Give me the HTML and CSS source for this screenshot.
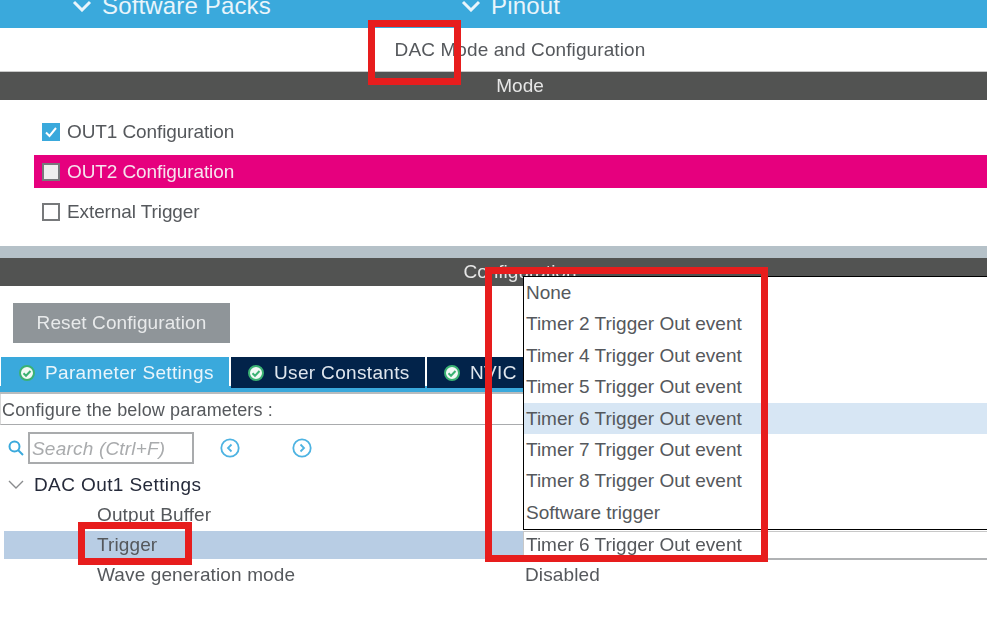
FILE: index.html
```html
<!DOCTYPE html>
<html>
<head>
    <meta charset="utf-8" />
    <title>DAC Mode and Configuration</title>
    <link rel="stylesheet" href="styles.css">
</head>
<body>
    <div class="topbar">
        <div class="pack pack-first">
            <svg class="chev" viewBox="0 0 20 12"><path d="M2 2l8 8 8-8" /></svg>
            <span>Software Packs</span>
        </div>
        <div class="pack">
            <svg class="chev" viewBox="0 0 20 12"><path d="M2 2l8 8 8-8" /></svg>
            <span>Pinout</span>
        </div>
    </div>

    <div class="title">DAC Mode and Configuration</div>
    <div class="bar">Mode</div>

    <div class="modes">
        <div class="mode">
            <span class="box box-on"><svg viewBox="0 0 18 18"><path d="M4 9.5l3.5 3.5 6.5-8" /></svg></span>
            OUT1 Configuration
        </div>
        <div class="mode mode-pink">
            <span class="box box-off"></span>
            OUT2 Configuration
        </div>
        <div class="mode">
            <span class="box"></span>
            External Trigger
        </div>
    </div>

    <div class="divider"></div>
    <div class="bar">Configuration</div>

    <button class="reset">Reset Configuration</button>

    <div class="tabs">
        <div class="tab tab-active tab-param">
            <svg class="ok" viewBox="0 0 16 16"><circle cx="8" cy="8" r="7" /><path d="M4.5 8.2l2.5 2.5 4.5-4.7" /></svg>
            Parameter Settings
        </div>
        <div class="tab tab-user">
            <svg class="ok" viewBox="0 0 16 16"><circle cx="8" cy="8" r="7" /><path d="M4.5 8.2l2.5 2.5 4.5-4.7" /></svg>
            User Constants
        </div>
        <div class="tab tab-nvic">
            <svg class="ok" viewBox="0 0 16 16"><circle cx="8" cy="8" r="7" /><path d="M4.5 8.2l2.5 2.5 4.5-4.7" /></svg>
            NVIC
        </div>
    </div>

    <div class="hint">Configure the below parameters :</div>

    <div class="searchrow">
        <svg class="lens" viewBox="0 0 16 16"><circle cx="6.5" cy="6.5" r="5" /><path d="M10 10l5 5" /></svg>
        <div class="search">Search (Ctrl+F)</div>
        <svg class="nav nav-prev" viewBox="0 0 20 20"><circle cx="10" cy="10" r="8.7" /><path d="M11.5 6.5L8 10l3.5 3.5" /></svg>
        <svg class="nav nav-next" viewBox="0 0 20 20"><circle cx="10" cy="10" r="8.7" /><path d="M8.5 6.5L12 10l-3.5 3.5" /></svg>
    </div>

    <div class="tree">
        <div class="group">
            <svg class="fold" viewBox="0 0 16 10"><path d="M1 1l7 7 7-7" /></svg>
            DAC Out1 Settings
        </div>
        <div class="param"><span>Output Buffer</span><span></span></div>
        <div class="param param-sel"><span>Trigger</span><span class="value">Timer 6 Trigger Out event</span></div>
        <div class="param"><span>Wave generation mode</span><span>Disabled</span></div>
    </div>

    <div class="dropdown">
        <div class="opt">None</div>
        <div class="opt">Timer 2 Trigger Out event</div>
        <div class="opt">Timer 4 Trigger Out event</div>
        <div class="opt">Timer 5 Trigger Out event</div>
        <div class="opt opt-hover">Timer 6 Trigger Out event</div>
        <div class="opt">Timer 7 Trigger Out event</div>
        <div class="opt">Timer 8 Trigger Out event</div>
        <div class="opt">Software trigger</div>
    </div>

    <div class="mark mark-title"></div>
    <div class="mark mark-list"></div>
    <div class="mark mark-trigger"></div>
</body>
</html>
```

FILE: styles.css
```css
* {
    margin: 0;
    padding: 0;
    box-sizing: border-box;
}

html, body {
    height: 100%;
    overflow: hidden;
}

body {
    position: relative;
    background: white;
    color: #55585c;
    font-family: "Liberation Sans", Arial, sans-serif;
    font-size: 19px;
    filter: blur(0.35px);
}

.topbar {
    height: 28px;
    padding-left: 72px;
    display: flex;
    overflow: hidden;
    background: #3aa9dc;
    color: #e9f5fb;
    font-size: 24px;
    letter-spacing: 0.15px;
}

.pack {
    display: flex;
    align-items: center;
    gap: 10px;
    height: 28px;
    margin-top: -8px;
}

.pack-first {
    width: 389px;
}

.chev {
    width: 20px;
    height: 12px;
    fill: none;
    stroke: #e9f5fb;
    stroke-width: 3;
}

.title {
    height: 44px;
    padding-left: 53px;
    line-height: 44px;
    text-align: center;
    letter-spacing: 0.1px;
    border-bottom: 1px solid #c8c8c8;
}

.bar {
    height: 28px;
    padding-left: 53px;
    line-height: 28px;
    text-align: center;
    background: #525352;
    color: #e6e6e6;
}

.modes {
    padding: 15px 0 18px 34px;
    display: grid;
    gap: 7px;
    letter-spacing: -0.1px;
}

.mode {
    height: 33px;
    padding-left: 8px;
    display: flex;
    align-items: center;
    gap: 7px;
}

.mode-pink {
    background: #e6007e;
    color: #f6e3ee;
}

.box {
    width: 18px;
    height: 18px;
    border: 2px solid #77797b;
    background: white;
}

.box-on {
    border: none;
    background: #3aa9dc;
}

.box-on svg {
    display: block;
    fill: none;
    stroke: white;
    stroke-width: 2;
}

.box-off {
    background: #eeeeee;
}

.divider {
    height: 12px;
    background: #b5c1c8;
}

.reset {
    display: block;
    width: 217px;
    height: 40px;
    margin: 17px 0 14px 13px;
    border: none;
    background: #8f9599;
    color: #e8eaeb;
    font-family: inherit;
    font-size: 19px;
    letter-spacing: 0.1px;
}

.tabs {
    height: 37px;
    padding-left: 1px;
    display: flex;
    gap: 2px;
    border-bottom: 2px solid #b9bcbe;
    box-shadow: inset 0 -6px 0 #3aa9dc;
}

.tab {
    height: 31px;
    display: flex;
    align-items: center;
    gap: 10px;
    letter-spacing: 0.34px;
    background: #02234a;
    color: #dfe6ee;
}

.tab-active {
    background: #3aa9dc;
    color: #e9f5fb;
}

.tab-param {
    width: 228px;
    padding-left: 18px;
}

.tab-user {
    width: 194px;
    padding-left: 17px;
}

.tab-nvic {
    width: 110px;
    padding-left: 17px;
}

.ok {
    width: 16px;
    height: 16px;
    fill: #f2faf5;
    stroke: #3bb273;
    stroke-width: 2;
}

.ok path {
    fill: none;
    stroke-width: 2;
}

.hint {
    height: 31px;
    padding-left: 1px;
    line-height: 33px;
    font-size: 18px;
    letter-spacing: 0.15px;
    border-bottom: 1px solid #a9abad;
    border-left: 1px solid #d8d8d8;
}

.searchrow {
    height: 32px;
    margin-top: 7px;
    padding-left: 8px;
    display: flex;
    align-items: center;
}

.lens {
    width: 16px;
    height: 16px;
    margin-right: 4px;
    fill: none;
    stroke: #3aa9dc;
    stroke-width: 2;
}

.search {
    width: 166px;
    height: 32px;
    padding-left: 2px;
    line-height: 30px;
    border: 2px solid #a9abad;
    color: #a9abad;
    font-style: italic;
    letter-spacing: 0.2px;
}

.nav {
    width: 20px;
    height: 20px;
    fill: none;
    stroke: #4db3e2;
    stroke-width: 1.8;
}

.nav-prev {
    margin-left: 26px;
}

.nav-next {
    margin-left: 52px;
}

.tree {
    margin-top: 6px;
}

.group {
    height: 30px;
    padding-left: 8px;
    display: flex;
    align-items: center;
    gap: 10px;
    color: #252a3a;
    letter-spacing: 0.4px;
}

.fold {
    width: 16px;
    height: 10px;
    fill: none;
    stroke: #8a8c8e;
    stroke-width: 1.4;
}

.param {
    height: 30px;
    margin-left: 4px;
    padding-left: 93px;
    display: grid;
    grid-template-columns: 426px 1fr;
    align-items: center;
    letter-spacing: 0.12px;
}

.param span:last-child {
    padding-left: 2px;
}

.param-sel {
    height: 28px;
    margin: 1px 0 1px 4px;
    background: #b8cde4;
    align-items: stretch;
    line-height: 28px;
}

.param .value {
    padding-left: 1px;
    background: white;
    border-top: 1px solid #c8c8c8;
    border-bottom: 2px solid #b0b2b4;
    border-left: 1px solid #c8c8c8;
    line-height: 26px;
    letter-spacing: 0;
}

.dropdown {
    position: absolute;
    left: 523px;
    top: 276px;
    width: 470px;
    height: 254px;
    border: 1.5px solid black;
    background: white;
}

.opt {
    height: 31.4px;
    padding-left: 2px;
    line-height: 31.4px;
}

.opt-hover {
    background: #d7e6f4;
}

.mark {
    position: absolute;
    border: 7px solid #e71d1d;
}

.mark-title {
    left: 368px;
    top: 20px;
    width: 93px;
    height: 65px;
}

.mark-list {
    left: 485px;
    top: 267px;
    width: 283px;
    height: 295px;
}

.mark-trigger {
    left: 78px;
    top: 522px;
    width: 114px;
    height: 43px;
}
```
